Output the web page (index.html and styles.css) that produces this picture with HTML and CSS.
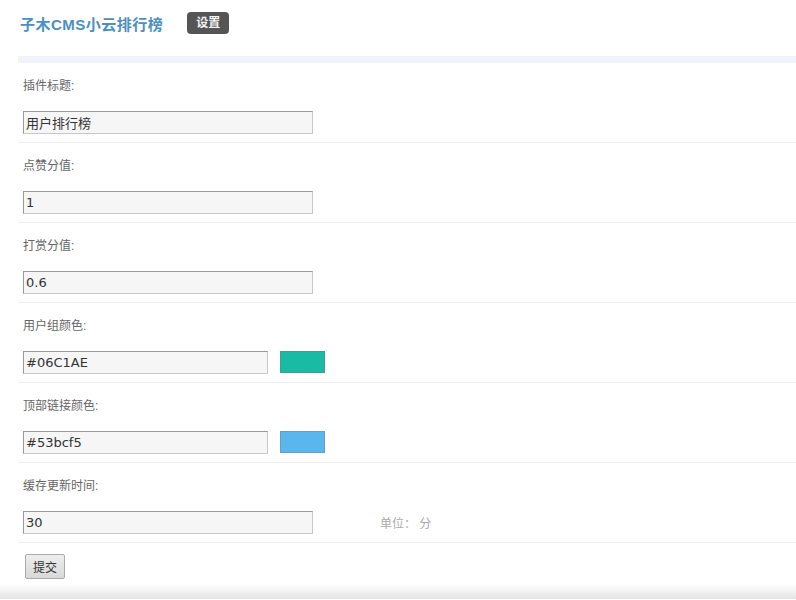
FILE: index.html
```html
<!DOCTYPE html>
<html lang="zh-CN">
<head>
    <meta charset="UTF-8">
    <title>子木CMS小云排行榜 - 设置</title>
    <link rel="stylesheet" href="styles.css">
</head>
<body>
    <div class="header">
        <h1 class="title">子木CMS小云排行榜</h1>
        <span class="tag">设置</span>
    </div>
    <div class="band"></div>

    <form class="settings">
        <div class="row">
            <label>插件标题:</label>
            <div class="field"><input type="text" value="用户排行榜"></div>
        </div>
        <div class="row">
            <label>点赞分值:</label>
            <div class="field"><input type="text" value="1"></div>
        </div>
        <div class="row">
            <label>打赏分值:</label>
            <div class="field"><input type="text" value="0.6"></div>
        </div>
        <div class="row">
            <label>用户组颜色:</label>
            <div class="field">
                <input type="text" class="short" value="#06C1AE">
                <span class="swatch swatch-green"></span>
            </div>
        </div>
        <div class="row">
            <label>顶部链接颜色:</label>
            <div class="field">
                <input type="text" class="short" value="#53bcf5">
                <span class="swatch swatch-blue"></span>
            </div>
        </div>
        <div class="row">
            <label>缓存更新时间:</label>
            <div class="field">
                <input type="text" value="30">
                <span class="unit">单位： 分</span>
            </div>
        </div>
        <div class="actions">
            <button type="button">提交</button>
        </div>
    </form>
    <div class="footer"></div>
</body>
</html>
```

FILE: styles.css
```css
body {
    margin: 0;
    background: #fff;
    font-family: "Liberation Sans", "Noto Sans CJK SC", sans-serif;
    color: #333;
}
.header {
    height: 46px;
    display: flex;
    align-items: center;
    padding: 0 0 0 20px;
}
.title {
    margin: 0;
    font-size: 15px;
    font-weight: bold;
    color: #4a90c0;
    letter-spacing: 0.5px;
}
.tag {
    margin-left: 24px;
    background: #555;
    color: #f4f4f4;
    font-size: 12px;
    font-weight: bold;
    padding: 3px 9px;
    border-radius: 4px;
    line-height: 16px;
}
.band {
    margin: 10px 0 0 18px;
    height: 7px;
    background: #f0f4fa;
}
.settings {
    padding-left: 18px;
}
.row {
    padding: 15px 0 8px 5px;
    border-bottom: 1px solid #eeeeee;
}
.row label {
    display: block;
    font-size: 12px;
    line-height: 16px;
    color: #666;
    margin-bottom: 17px;
}
.field {
    display: flex;
    align-items: center;
    height: 23px;
}
.field input {
    box-sizing: border-box;
    width: 290px;
    height: 23px;
    margin: 0;
    padding: 0 2px;
    font-family: "DejaVu Sans", "Noto Sans CJK SC", sans-serif;
    font-size: 13px;
    color: #333;
    background: #f6f6f6;
    border: 1px solid #c8c8c8;
    border-top-color: #999;
    border-left-color: #999;
}
.field input.short {
    width: 245px;
}
.swatch {
    width: 45px;
    height: 22px;
    margin-left: 12px;
    margin-top: -2px;
    border: 1px solid #8aa;
    box-sizing: border-box;
}
.swatch-green {
    background: #19bba5;
    border-color: #4a9a90;
}
.swatch-blue {
    background: #5ab6ee;
    border-color: #6c9cc0;
}
.unit {
    margin-left: 67px;
    font-size: 12px;
    color: #aaa;
}
.actions {
    padding: 11px 0 0 7px;
}
.actions button {
    width: 40px;
    height: 25px;
    padding: 0;
    font-family: "Noto Sans CJK SC", sans-serif;
    font-size: 12px;
    color: #333;
    background: linear-gradient(#eee, #d8d8d8);
    border: 1px solid #aaa;
    border-radius: 2px;
}
.footer {
    margin-top: 5px;
    height: 15px;
    background: linear-gradient(#fff, #e4e4e4);
}
```
